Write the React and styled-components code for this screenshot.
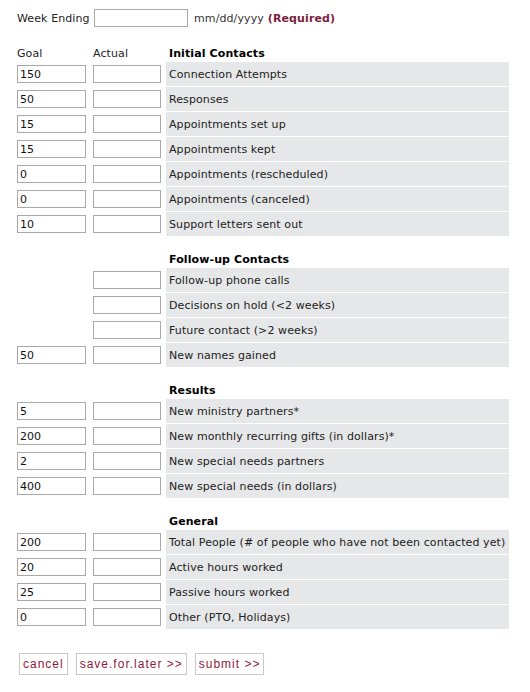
import React from "react";
import styled, { createGlobalStyle } from "styled-components";

const Global = createGlobalStyle`
  html, body { margin: 0; padding: 0; background: #fff; }
  body { font-family: Verdana, "DejaVu Sans", sans-serif; font-size: 11px; color: #222; letter-spacing: 0.1px; }
`;

const Page = styled.div`
  padding: 9px 0 0 17px;
  width: 492px;
`;

const WeekRow = styled.div`
  display: flex;
  align-items: center;
  height: 18px;
`;

const WeekLabel = styled.span`
  width: 77px;
`;

const Hint = styled.span`
  margin-left: 6px;
  color: #333;
`;

const Required = styled.b`
  color: #7b1e3e;
  margin-left: 4px;
`;

const Input = styled.input`
  box-sizing: border-box;
  width: ${(p) => p.$w}px;
  height: 18px;
  border: 1px solid #a9a9a9;
  padding: 0 2px;
  margin: 0;
  font-family: Verdana, "DejaVu Sans", sans-serif;
  font-size: 11px;
  color: #111;
  background: #fff;
  outline: none;
`;

const Sections = styled.div`
  margin-top: 17px;
`;

const Row = styled.div`
  display: grid;
  grid-template-columns: 76px 73px 343px;
  height: 24px;
  margin-bottom: 1px;
`;

const HeadRow = styled.div`
  display: grid;
  grid-template-columns: 76px 73px 343px;
  height: 18px;
  align-items: center;
  margin-top: ${(p) => (p.$first ? 0 : 14)}px;
`;

const ColHead = styled.span`
  color: #222;
`;

const SectionTitle = styled.b`
  padding-left: 3px;
  color: #000;
`;

const InputCell = styled.div`
  display: flex;
  align-items: center;
`;

const LabelCell = styled.div`
  background: #e6e7e8;
  display: flex;
  align-items: center;
  padding-left: 3px;
  white-space: nowrap;
`;

const Buttons = styled.div`
  display: flex;
  gap: 8px;
  margin: 24px 0 0 2px;
`;

const Button = styled.button`
  box-sizing: border-box;
  height: 22px;
  padding: 0 3px;
  border: 1px solid #c8c8c8;
  background: #fff;
  color: #8e1b3c;
  font-family: "Liberation Sans", Arial, sans-serif;
  font-size: 12px;
  letter-spacing: 1px;
  cursor: pointer;
`;

const sections = [
  {
    title: "Initial Contacts",
    first: true,
    rows: [
      ["150", "Connection Attempts"],
      ["50", "Responses"],
      ["15", "Appointments set up"],
      ["15", "Appointments kept"],
      ["0", "Appointments (rescheduled)"],
      ["0", "Appointments (canceled)"],
      ["10", "Support letters sent out"],
    ],
  },
  {
    title: "Follow-up Contacts",
    rows: [
      [null, "Follow-up phone calls"],
      [null, "Decisions on hold (<2 weeks)"],
      [null, "Future contact (>2 weeks)"],
      ["50", "New names gained"],
    ],
  },
  {
    title: "Results",
    rows: [
      ["5", "New ministry partners*"],
      ["200", "New monthly recurring gifts (in dollars)*"],
      ["2", "New special needs partners"],
      ["400", "New special needs (in dollars)"],
    ],
  },
  {
    title: "General",
    rows: [
      ["200", "Total People (# of people who have not been contacted yet)"],
      ["20", "Active hours worked"],
      ["25", "Passive hours worked"],
      ["0", "Other (PTO, Holidays)"],
    ],
  },
];

export default function App() {
  return (
    <Page>
      <Global />
      <WeekRow>
        <WeekLabel>Week Ending</WeekLabel>
        <Input $w={94} />
        <Hint>mm/dd/yyyy</Hint>
        <Required>(Required)</Required>
      </WeekRow>
      <Sections>
        {sections.map((s) => (
          <React.Fragment key={s.title}>
            <HeadRow $first={s.first}>
              <ColHead>{s.first ? "Goal" : ""}</ColHead>
              <ColHead>{s.first ? "Actual" : ""}</ColHead>
              <SectionTitle>{s.title}</SectionTitle>
            </HeadRow>
            {s.rows.map(([goal, label]) => (
              <Row key={label}>
                <InputCell>
                  {goal !== null && <Input $w={69} defaultValue={goal} />}
                </InputCell>
                <InputCell>
                  <Input $w={68} />
                </InputCell>
                <LabelCell>{label}</LabelCell>
              </Row>
            ))}
          </React.Fragment>
        ))}
      </Sections>
      <Buttons>
        <Button>cancel</Button>
        <Button>save.for.later &gt;&gt;</Button>
        <Button>submit &gt;&gt;</Button>
      </Buttons>
    </Page>
  );
}
